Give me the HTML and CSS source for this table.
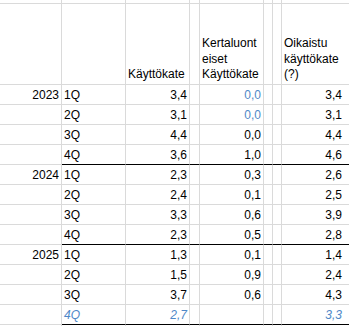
FILE: index.html
```html
<!DOCTYPE html>
<html lang="fi">
<head>
<meta charset="utf-8">
<link rel="stylesheet" href="styles.css">
</head>
<body>
<div class="sheet">
  <div class="c top"></div><div class="c top"></div><div class="c top"></div><div class="c top"></div><div class="c top"></div><div class="c top"></div><div class="c top"></div><div class="c top last"></div>

  <div class="c hd"></div>
  <div class="c hd"></div>
  <div class="c hd">Käyttökate</div>
  <div class="c hd"></div>
  <div class="c hd">Kertaluont<br>eiset<br>Käyttökate</div>
  <div class="c hd"></div>
  <div class="c hd"></div>
  <div class="c hd last colh">Oikaistu<br>käyttökate<br>(?)</div>

  <div class="c r">2023</div><div class="c q">1Q</div><div class="c r">3,4</div><div class="c"></div><div class="c r blue">0,0</div><div class="c"></div><div class="c"></div><div class="c r last colh">3,4</div>
  <div class="c r"></div><div class="c q">2Q</div><div class="c r">3,1</div><div class="c"></div><div class="c r blue">0,0</div><div class="c"></div><div class="c"></div><div class="c r last colh">3,1</div>
  <div class="c r"></div><div class="c q">3Q</div><div class="c r">4,4</div><div class="c"></div><div class="c r">0,0</div><div class="c"></div><div class="c"></div><div class="c r last colh">4,4</div>
  <div class="c r"></div><div class="c q k">4Q</div><div class="c r k">3,6</div><div class="c k"></div><div class="c r k">1,0</div><div class="c k"></div><div class="c k"></div><div class="c r last colh k">4,6</div>

  <div class="c r">2024</div><div class="c q">1Q</div><div class="c r">2,3</div><div class="c"></div><div class="c r">0,3</div><div class="c"></div><div class="c"></div><div class="c r last colh">2,6</div>
  <div class="c r"></div><div class="c q">2Q</div><div class="c r">2,4</div><div class="c"></div><div class="c r">0,1</div><div class="c"></div><div class="c"></div><div class="c r last colh">2,5</div>
  <div class="c r"></div><div class="c q">3Q</div><div class="c r">3,3</div><div class="c"></div><div class="c r">0,6</div><div class="c"></div><div class="c"></div><div class="c r last colh">3,9</div>
  <div class="c r"></div><div class="c q k">4Q</div><div class="c r k">2,3</div><div class="c k"></div><div class="c r k">0,5</div><div class="c k"></div><div class="c k"></div><div class="c r last colh k">2,8</div>

  <div class="c r">2025</div><div class="c q">1Q</div><div class="c r">1,3</div><div class="c"></div><div class="c r">0,1</div><div class="c"></div><div class="c"></div><div class="c r last colh">1,4</div>
  <div class="c r"></div><div class="c q">2Q</div><div class="c r">1,5</div><div class="c"></div><div class="c r">0,9</div><div class="c"></div><div class="c"></div><div class="c r last colh">2,4</div>
  <div class="c r"></div><div class="c q">3Q</div><div class="c r">3,7</div><div class="c"></div><div class="c r">0,6</div><div class="c"></div><div class="c"></div><div class="c r last colh">4,3</div>
  <div class="c r"></div><div class="c q k est">4Q</div><div class="c r k est">2,7</div><div class="c k"></div><div class="c r k"></div><div class="c k"></div><div class="c k"></div><div class="c r last colh k est">3,3</div>

  <div class="c"></div><div class="c"></div><div class="c"></div><div class="c"></div><div class="c"></div><div class="c"></div><div class="c"></div><div class="c last"></div>
</div>
</body>
</html>
```

FILE: styles.css
```css
html, body {
  margin: 0;
  padding: 0;
  background: #ffffff;
}

.sheet {
  width: 349px;
  height: 326px;
  overflow: hidden;
  display: grid;
  grid-template-columns: 62px 64px 64px 10px 64px 9px 9px 67px;
  grid-template-rows: 4px 81px repeat(13, 20px);
  font-family: "Liberation Sans", Arial, sans-serif;
  font-size: 12px;
  color: #000000;
}

.c {
  box-sizing: border-box;
  border-right: 1px solid #dadada;
  border-bottom: 1px solid #dadada;
  padding: 0 2px 1px 2px;
  line-height: 15px;
  white-space: nowrap;
  display: flex;
  align-items: flex-end;
  overflow: hidden;
}

.c.last {
  border-right: none;
}

.c.top {
  padding: 0;
}

.hd {
  line-height: 15.7px;
}

.r {
  justify-content: flex-end;
  text-align: right;
}

.q {
  padding-left: 2px;
}

.colh.r {
  padding-right: 7px;
}

.k {
  border-bottom: 1px solid #000000;
}

.blue {
  color: #4f88c8;
}

.est {
  color: #4f88c8;
  font-style: italic;
}
```
